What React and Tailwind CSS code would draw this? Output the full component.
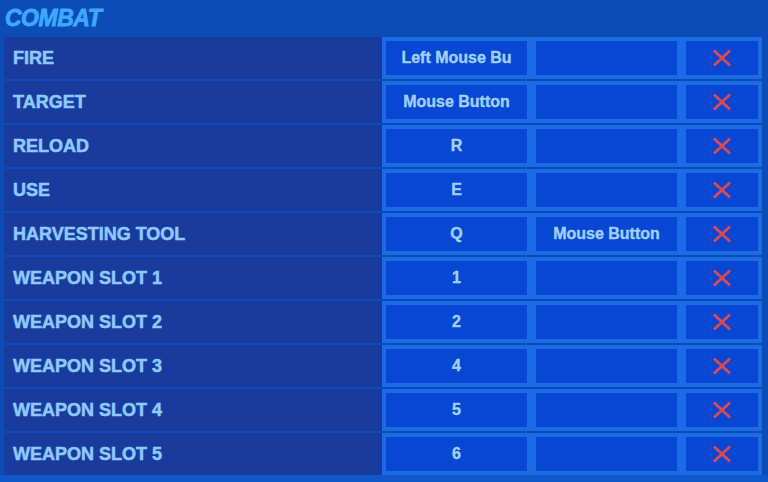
import React from "react";

const rows = [
  { label: "FIRE", key1: "Left Mouse Bu", key2: "" },
  { label: "TARGET", key1: "Mouse Button", key2: "" },
  { label: "RELOAD", key1: "R", key2: "" },
  { label: "USE", key1: "E", key2: "" },
  { label: "HARVESTING TOOL", key1: "Q", key2: "Mouse Button" },
  { label: "WEAPON SLOT 1", key1: "1", key2: "" },
  { label: "WEAPON SLOT 2", key1: "2", key2: "" },
  { label: "WEAPON SLOT 3", key1: "4", key2: "" },
  { label: "WEAPON SLOT 4", key1: "5", key2: "" },
  { label: "WEAPON SLOT 5", key1: "6", key2: "" },
];

// red cross used to clear a binding
const ClearIcon = () => (
  <svg width="20" height="18" viewBox="0 0 20 18">
    <path
      d="M2 1.5 L18 16.5 M18 1.5 L2 16.5"
      stroke="#e0474f"
      strokeWidth="2.8"
      strokeLinecap="butt"
    />
  </svg>
);

const App = () => {
  return (
    <div
      className="w-[768px] h-[482px] overflow-hidden bg-[#0b4cb6]"
      style={{ fontFamily: '"Liberation Sans", Arial, sans-serif' }}
    >
      <div className="h-[37px] flex items-center pl-[5px]">
        <span className="text-[23px] font-bold italic text-[#3ea8ff] tracking-[-0.5px] [-webkit-text-stroke:0.8px_#3ea8ff]">
          COMBAT
        </span>
      </div>
      <div className="flex flex-col gap-[2px] pl-[4px] pr-[6px]">
        {rows.map((row) => (
          <div key={row.label} className="flex h-[42px]">
            <div className="flex-1 bg-[#1a3b9e] flex items-center pl-[9px]">
              <span className="text-[18px] font-bold text-[#8dc9ff] [-webkit-text-stroke:0.5px_#8dc9ff]">
                {row.label}
              </span>
            </div>
            <div className="w-[380px] bg-[#1b6be6] p-[4px] flex gap-[9px]">
              <div className="w-[141px] bg-[#0846d4] flex items-center justify-center overflow-hidden whitespace-nowrap">
                <span className="text-[16px] font-bold text-[#9fd0ff] [-webkit-text-stroke:0.4px_#9fd0ff]">
                  {row.key1}
                </span>
              </div>
              <div className="w-[141px] bg-[#0846d4] flex items-center justify-center overflow-hidden whitespace-nowrap">
                <span className="text-[16px] font-bold text-[#9fd0ff] [-webkit-text-stroke:0.4px_#9fd0ff]">
                  {row.key2}
                </span>
              </div>
              <div className="w-[72px] bg-[#0846d4] flex items-center justify-center">
                <ClearIcon />
              </div>
            </div>
          </div>
        ))}
      </div>
      <div className="h-[7px] bg-[#0e58cc]"></div>
    </div>
  );
};

export default App;
